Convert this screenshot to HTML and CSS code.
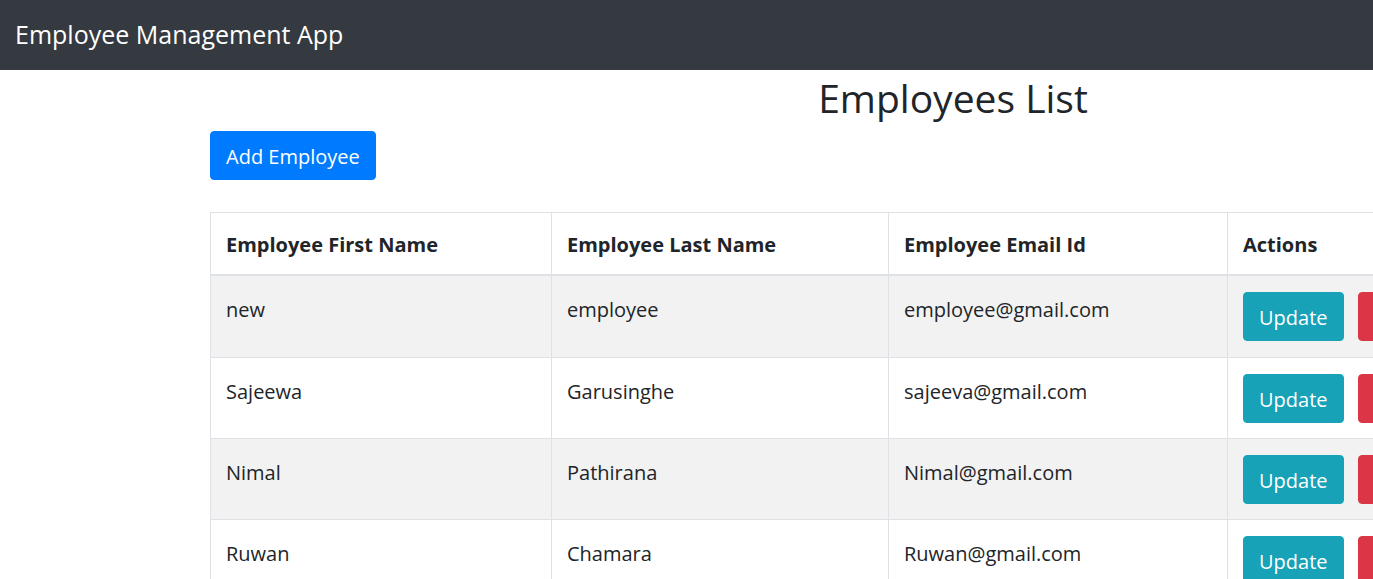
FILE: index.html
```html
<!DOCTYPE html>
<html lang="en">
<head>
<meta charset="utf-8">
<title>Employee Management App</title>
<link rel="stylesheet" href="styles.css">
</head>
<body>
<header class="navbar">
  <span class="brand">Employee Management App</span>
</header>
<main class="content">
  <h2 class="title">Employees List</h2>
  <div class="toolbar">
    <button class="btn btn-primary">Add Employee</button>
  </div>
  <table class="table">
    <colgroup>
      <col class="c1"><col class="c2"><col class="c3"><col class="c4">
    </colgroup>
    <thead>
      <tr>
        <th>Employee First Name</th>
        <th>Employee Last Name</th>
        <th>Employee Email Id</th>
        <th>Actions</th>
      </tr>
    </thead>
    <tbody>
      <tr>
        <td>new</td><td>employee</td><td>employee@gmail.com</td>
        <td class="actions"><button class="btn btn-info">Update</button><button class="btn btn-danger">Delete</button></td>
      </tr>
      <tr>
        <td>Sajeewa</td><td>Garusinghe</td><td>sajeeva@gmail.com</td>
        <td class="actions"><button class="btn btn-info">Update</button><button class="btn btn-danger">Delete</button></td>
      </tr>
      <tr>
        <td>Nimal</td><td>Pathirana</td><td>Nimal@gmail.com</td>
        <td class="actions"><button class="btn btn-info">Update</button><button class="btn btn-danger">Delete</button></td>
      </tr>
      <tr>
        <td>Ruwan</td><td>Chamara</td><td>Ruwan@gmail.com</td>
        <td class="actions"><button class="btn btn-info">Update</button><button class="btn btn-danger">Delete</button></td>
      </tr>
    </tbody>
  </table>
</main>
</body>
</html>
```

FILE: styles.css
```css
html, body {
  overflow: hidden;
}
body {
  margin: 0;
  font-family: "Open Sans", "Noto Sans", sans-serif;
  font-size: 20px;
  line-height: 1.5;
  color: #212529;
  background: #fff;
}
.navbar {
  height: 70px;
  background: #343a40;
  display: flex;
  align-items: center;
  padding: 0 15px;
}
.brand {
  color: #fff;
  font-size: 25px;
  line-height: 1.5;
}
.content {
  margin-left: 210px;
  width: 1486px;
}
.title {
  margin: 4px 0 9px;
  text-align: center;
  font-size: 39px;
  font-weight: 400;
  line-height: 48px;
}
.toolbar {
  margin-bottom: 32px;
  line-height: 0;
}
.btn {
  font-family: inherit;
  font-size: 20px;
  line-height: 30px;
  height: 49px;
  padding: 3px 15px 0;
  border: 1px solid transparent;
  border-radius: 4px;
  color: #fff;
  cursor: pointer;
  vertical-align: top;
}
.btn-primary { background: #007bff; border-color: #007bff; }
.btn-info { background: #17a2b8; border-color: #17a2b8; }
.btn-danger { background: #dc3545; border-color: #dc3545; margin-left: 14px; }
.table {
  border-collapse: collapse;
  width: 1486px;
  table-layout: fixed;
}
.c1 { width: 341px; }
.c2 { width: 337px; }
.c3 { width: 339px; }
.table th, .table td {
  border: 1px solid #dee2e6;
  padding: 19px 15px 12px;
  text-align: left;
  vertical-align: top;
}
.table th {
  font-weight: 700;
  padding: 17px 15px 14px;
  border-bottom: 2px solid #dee2e6;
}
.table td.actions {
  padding: 16px 15px 15px;
  line-height: 0;
  white-space: nowrap;
}
.table tbody tr:first-child td {
  padding-bottom: 16px;
}
.table tbody tr:first-child td:not(.actions) {
  padding-bottom: 13px;
}
.table tbody tr:nth-child(odd) {
  background: #f2f2f2;
}
```
